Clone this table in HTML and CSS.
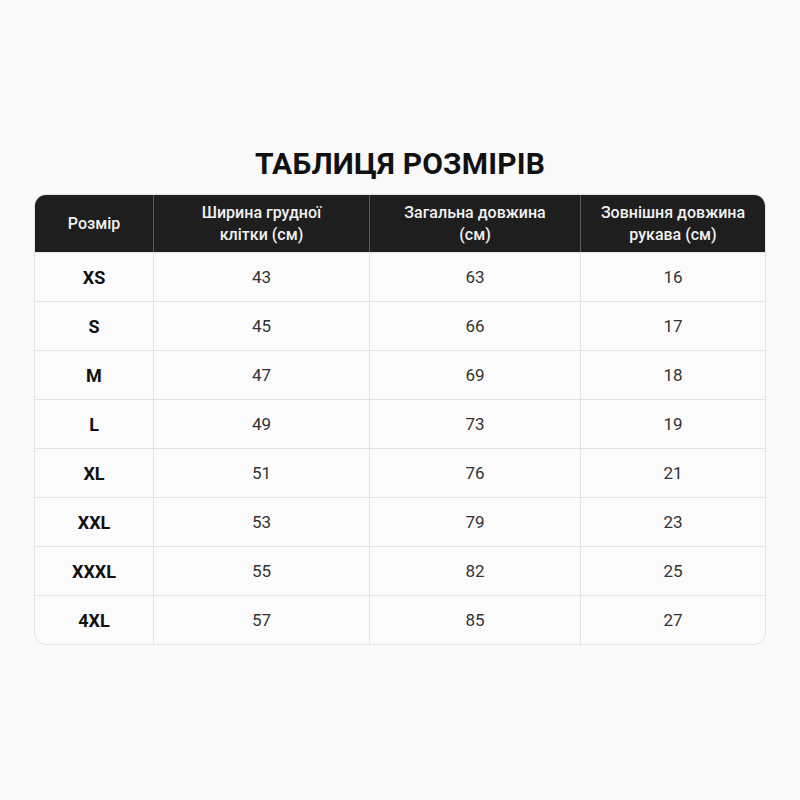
FILE: index.html
```html
<!DOCTYPE html>
<html lang="uk">
<head>
<meta charset="utf-8">
<link rel="stylesheet" href="styles.css">
</head>
<body>
<main class="page">
  <h1 class="title">ТАБЛИЦЯ РОЗМІРІВ</h1>
  <div class="table">
    <div class="row head">
      <div class="cell">Розмір</div>
      <div class="cell">Ширина грудної<br>клітки (см)</div>
      <div class="cell">Загальна довжина<br>(см)</div>
      <div class="cell">Зовнішня довжина<br>рукава (см)</div>
    </div>
    <div class="row"><div class="cell size">XS</div><div class="cell">43</div><div class="cell">63</div><div class="cell">16</div></div>
    <div class="row"><div class="cell size">S</div><div class="cell">45</div><div class="cell">66</div><div class="cell">17</div></div>
    <div class="row"><div class="cell size">M</div><div class="cell">47</div><div class="cell">69</div><div class="cell">18</div></div>
    <div class="row"><div class="cell size">L</div><div class="cell">49</div><div class="cell">73</div><div class="cell">19</div></div>
    <div class="row"><div class="cell size">XL</div><div class="cell">51</div><div class="cell">76</div><div class="cell">21</div></div>
    <div class="row"><div class="cell size">XXL</div><div class="cell">53</div><div class="cell">79</div><div class="cell">23</div></div>
    <div class="row"><div class="cell size">XXXL</div><div class="cell">55</div><div class="cell">82</div><div class="cell">25</div></div>
    <div class="row"><div class="cell size">4XL</div><div class="cell">57</div><div class="cell">85</div><div class="cell">27</div></div>
  </div>
</main>
</body>
</html>
```
FILE: styles.css
```css
html, body {
  margin: 0;
  padding: 0;
  background: #f9f9f9;
  font-family: Roboto, "Liberation Sans", sans-serif;
  color: #1a1a1a;
}
.page {
  width: 732px;
  margin: 0 auto;
  padding-top: 144px;
}
.title {
  margin: 0 0 10px;
  text-align: center;
  font-size: 30px;
  line-height: 40px;
  font-weight: 700;
  color: #111;
  letter-spacing: 0.2px;
}
.table {
  border: 1px solid #e2e2e2;
  border-radius: 12px;
  overflow: hidden;
  background: #fbfbfb;
}
.row {
  box-sizing: border-box;
  display: grid;
  grid-template-columns: 118px 216px 211px 1fr;
  height: 49px;
  border-top: 1px solid #e2e2e2;
}
.row.head {
  height: 57px;
  border-top: none;
  background: #1e1e1e;
}
.cell {
  display: flex;
  align-items: center;
  justify-content: center;
  text-align: center;
  font-size: 17px;
  color: #333;
  border-left: 1px solid #e2e2e2;
}
.cell:first-child {
  border-left: none;
}
.head .cell {
  color: #f2f2f2;
  font-size: 16px;
  line-height: 22px;
  font-weight: 500;
  border-left-color: #5a5a5a;
}
.cell.size {
  font-weight: 700;
  font-size: 18px;
  color: #111;
}
```
